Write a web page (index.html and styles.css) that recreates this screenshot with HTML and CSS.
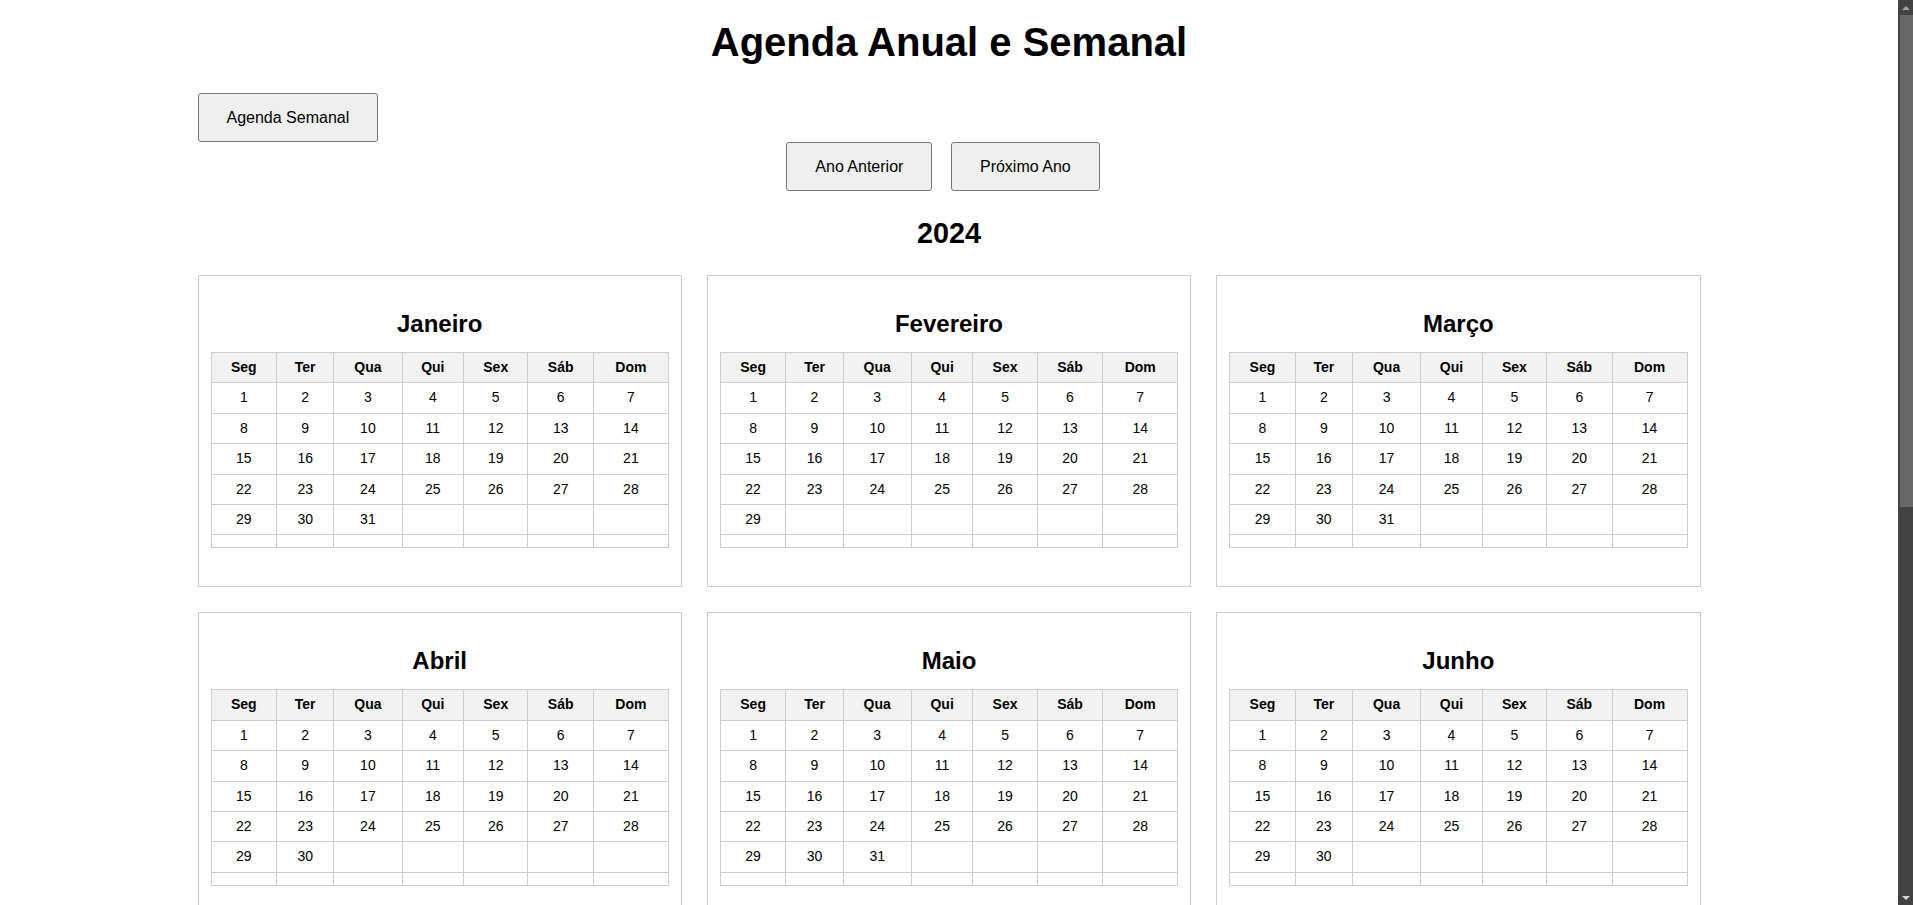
FILE: index.html
```html
<!DOCTYPE html>
<html lang="pt-BR">
<head>
<meta charset="utf-8">
<title>Agenda Anual e Semanal</title>
<link rel="stylesheet" href="styles.css">
</head>
<body>
<div class="page">
  <h1 class="title">Agenda Anual e Semanal</h1>
  <div class="toolbar"><button class="btn">Agenda Semanal</button></div>
  <div class="year-nav"><button class="btn">Ano Anterior</button><button class="btn">Próximo Ano</button></div>
  <h2 class="year">2024</h2>
  <div class="months">
    <section class="month">
      <h2 class="month-name">Janeiro</h2>
      <table class="cal">
        <tr><th>Seg</th><th>Ter</th><th>Qua</th><th>Qui</th><th>Sex</th><th>Sáb</th><th>Dom</th></tr>
        <tr><td>1</td><td>2</td><td>3</td><td>4</td><td>5</td><td>6</td><td>7</td></tr>
        <tr><td>8</td><td>9</td><td>10</td><td>11</td><td>12</td><td>13</td><td>14</td></tr>
        <tr><td>15</td><td>16</td><td>17</td><td>18</td><td>19</td><td>20</td><td>21</td></tr>
        <tr><td>22</td><td>23</td><td>24</td><td>25</td><td>26</td><td>27</td><td>28</td></tr>
        <tr><td>29</td><td>30</td><td>31</td><td></td><td></td><td></td><td></td></tr>
        <tr><td></td><td></td><td></td><td></td><td></td><td></td><td></td></tr>
      </table>
    </section>
    <section class="month">
      <h2 class="month-name">Fevereiro</h2>
      <table class="cal">
        <tr><th>Seg</th><th>Ter</th><th>Qua</th><th>Qui</th><th>Sex</th><th>Sáb</th><th>Dom</th></tr>
        <tr><td>1</td><td>2</td><td>3</td><td>4</td><td>5</td><td>6</td><td>7</td></tr>
        <tr><td>8</td><td>9</td><td>10</td><td>11</td><td>12</td><td>13</td><td>14</td></tr>
        <tr><td>15</td><td>16</td><td>17</td><td>18</td><td>19</td><td>20</td><td>21</td></tr>
        <tr><td>22</td><td>23</td><td>24</td><td>25</td><td>26</td><td>27</td><td>28</td></tr>
        <tr><td>29</td><td></td><td></td><td></td><td></td><td></td><td></td></tr>
        <tr><td></td><td></td><td></td><td></td><td></td><td></td><td></td></tr>
      </table>
    </section>
    <section class="month">
      <h2 class="month-name">Março</h2>
      <table class="cal">
        <tr><th>Seg</th><th>Ter</th><th>Qua</th><th>Qui</th><th>Sex</th><th>Sáb</th><th>Dom</th></tr>
        <tr><td>1</td><td>2</td><td>3</td><td>4</td><td>5</td><td>6</td><td>7</td></tr>
        <tr><td>8</td><td>9</td><td>10</td><td>11</td><td>12</td><td>13</td><td>14</td></tr>
        <tr><td>15</td><td>16</td><td>17</td><td>18</td><td>19</td><td>20</td><td>21</td></tr>
        <tr><td>22</td><td>23</td><td>24</td><td>25</td><td>26</td><td>27</td><td>28</td></tr>
        <tr><td>29</td><td>30</td><td>31</td><td></td><td></td><td></td><td></td></tr>
        <tr><td></td><td></td><td></td><td></td><td></td><td></td><td></td></tr>
      </table>
    </section>
    <section class="month">
      <h2 class="month-name">Abril</h2>
      <table class="cal">
        <tr><th>Seg</th><th>Ter</th><th>Qua</th><th>Qui</th><th>Sex</th><th>Sáb</th><th>Dom</th></tr>
        <tr><td>1</td><td>2</td><td>3</td><td>4</td><td>5</td><td>6</td><td>7</td></tr>
        <tr><td>8</td><td>9</td><td>10</td><td>11</td><td>12</td><td>13</td><td>14</td></tr>
        <tr><td>15</td><td>16</td><td>17</td><td>18</td><td>19</td><td>20</td><td>21</td></tr>
        <tr><td>22</td><td>23</td><td>24</td><td>25</td><td>26</td><td>27</td><td>28</td></tr>
        <tr><td>29</td><td>30</td><td></td><td></td><td></td><td></td><td></td></tr>
        <tr><td></td><td></td><td></td><td></td><td></td><td></td><td></td></tr>
      </table>
    </section>
    <section class="month">
      <h2 class="month-name">Maio</h2>
      <table class="cal">
        <tr><th>Seg</th><th>Ter</th><th>Qua</th><th>Qui</th><th>Sex</th><th>Sáb</th><th>Dom</th></tr>
        <tr><td>1</td><td>2</td><td>3</td><td>4</td><td>5</td><td>6</td><td>7</td></tr>
        <tr><td>8</td><td>9</td><td>10</td><td>11</td><td>12</td><td>13</td><td>14</td></tr>
        <tr><td>15</td><td>16</td><td>17</td><td>18</td><td>19</td><td>20</td><td>21</td></tr>
        <tr><td>22</td><td>23</td><td>24</td><td>25</td><td>26</td><td>27</td><td>28</td></tr>
        <tr><td>29</td><td>30</td><td>31</td><td></td><td></td><td></td><td></td></tr>
        <tr><td></td><td></td><td></td><td></td><td></td><td></td><td></td></tr>
      </table>
    </section>
    <section class="month">
      <h2 class="month-name">Junho</h2>
      <table class="cal">
        <tr><th>Seg</th><th>Ter</th><th>Qua</th><th>Qui</th><th>Sex</th><th>Sáb</th><th>Dom</th></tr>
        <tr><td>1</td><td>2</td><td>3</td><td>4</td><td>5</td><td>6</td><td>7</td></tr>
        <tr><td>8</td><td>9</td><td>10</td><td>11</td><td>12</td><td>13</td><td>14</td></tr>
        <tr><td>15</td><td>16</td><td>17</td><td>18</td><td>19</td><td>20</td><td>21</td></tr>
        <tr><td>22</td><td>23</td><td>24</td><td>25</td><td>26</td><td>27</td><td>28</td></tr>
        <tr><td>29</td><td>30</td><td></td><td></td><td></td><td></td><td></td></tr>
        <tr><td></td><td></td><td></td><td></td><td></td><td></td><td></td></tr>
      </table>
    </section>
    <section class="month">
      <h2 class="month-name">Julho</h2>
      <table class="cal">
        <tr><th>Seg</th><th>Ter</th><th>Qua</th><th>Qui</th><th>Sex</th><th>Sáb</th><th>Dom</th></tr>
        <tr><td>1</td><td>2</td><td>3</td><td>4</td><td>5</td><td>6</td><td>7</td></tr>
        <tr><td>8</td><td>9</td><td>10</td><td>11</td><td>12</td><td>13</td><td>14</td></tr>
        <tr><td>15</td><td>16</td><td>17</td><td>18</td><td>19</td><td>20</td><td>21</td></tr>
        <tr><td>22</td><td>23</td><td>24</td><td>25</td><td>26</td><td>27</td><td>28</td></tr>
        <tr><td>29</td><td>30</td><td>31</td><td></td><td></td><td></td><td></td></tr>
        <tr><td></td><td></td><td></td><td></td><td></td><td></td><td></td></tr>
      </table>
    </section>
    <section class="month">
      <h2 class="month-name">Agosto</h2>
      <table class="cal">
        <tr><th>Seg</th><th>Ter</th><th>Qua</th><th>Qui</th><th>Sex</th><th>Sáb</th><th>Dom</th></tr>
        <tr><td>1</td><td>2</td><td>3</td><td>4</td><td>5</td><td>6</td><td>7</td></tr>
        <tr><td>8</td><td>9</td><td>10</td><td>11</td><td>12</td><td>13</td><td>14</td></tr>
        <tr><td>15</td><td>16</td><td>17</td><td>18</td><td>19</td><td>20</td><td>21</td></tr>
        <tr><td>22</td><td>23</td><td>24</td><td>25</td><td>26</td><td>27</td><td>28</td></tr>
        <tr><td>29</td><td>30</td><td>31</td><td></td><td></td><td></td><td></td></tr>
        <tr><td></td><td></td><td></td><td></td><td></td><td></td><td></td></tr>
      </table>
    </section>
    <section class="month">
      <h2 class="month-name">Setembro</h2>
      <table class="cal">
        <tr><th>Seg</th><th>Ter</th><th>Qua</th><th>Qui</th><th>Sex</th><th>Sáb</th><th>Dom</th></tr>
        <tr><td>1</td><td>2</td><td>3</td><td>4</td><td>5</td><td>6</td><td>7</td></tr>
        <tr><td>8</td><td>9</td><td>10</td><td>11</td><td>12</td><td>13</td><td>14</td></tr>
        <tr><td>15</td><td>16</td><td>17</td><td>18</td><td>19</td><td>20</td><td>21</td></tr>
        <tr><td>22</td><td>23</td><td>24</td><td>25</td><td>26</td><td>27</td><td>28</td></tr>
        <tr><td>29</td><td>30</td><td></td><td></td><td></td><td></td><td></td></tr>
        <tr><td></td><td></td><td></td><td></td><td></td><td></td><td></td></tr>
      </table>
    </section>
    <section class="month">
      <h2 class="month-name">Outubro</h2>
      <table class="cal">
        <tr><th>Seg</th><th>Ter</th><th>Qua</th><th>Qui</th><th>Sex</th><th>Sáb</th><th>Dom</th></tr>
        <tr><td>1</td><td>2</td><td>3</td><td>4</td><td>5</td><td>6</td><td>7</td></tr>
        <tr><td>8</td><td>9</td><td>10</td><td>11</td><td>12</td><td>13</td><td>14</td></tr>
        <tr><td>15</td><td>16</td><td>17</td><td>18</td><td>19</td><td>20</td><td>21</td></tr>
        <tr><td>22</td><td>23</td><td>24</td><td>25</td><td>26</td><td>27</td><td>28</td></tr>
        <tr><td>29</td><td>30</td><td>31</td><td></td><td></td><td></td><td></td></tr>
        <tr><td></td><td></td><td></td><td></td><td></td><td></td><td></td></tr>
      </table>
    </section>
    <section class="month">
      <h2 class="month-name">Novembro</h2>
      <table class="cal">
        <tr><th>Seg</th><th>Ter</th><th>Qua</th><th>Qui</th><th>Sex</th><th>Sáb</th><th>Dom</th></tr>
        <tr><td>1</td><td>2</td><td>3</td><td>4</td><td>5</td><td>6</td><td>7</td></tr>
        <tr><td>8</td><td>9</td><td>10</td><td>11</td><td>12</td><td>13</td><td>14</td></tr>
        <tr><td>15</td><td>16</td><td>17</td><td>18</td><td>19</td><td>20</td><td>21</td></tr>
        <tr><td>22</td><td>23</td><td>24</td><td>25</td><td>26</td><td>27</td><td>28</td></tr>
        <tr><td>29</td><td>30</td><td></td><td></td><td></td><td></td><td></td></tr>
        <tr><td></td><td></td><td></td><td></td><td></td><td></td><td></td></tr>
      </table>
    </section>
    <section class="month">
      <h2 class="month-name">Dezembro</h2>
      <table class="cal">
        <tr><th>Seg</th><th>Ter</th><th>Qua</th><th>Qui</th><th>Sex</th><th>Sáb</th><th>Dom</th></tr>
        <tr><td>1</td><td>2</td><td>3</td><td>4</td><td>5</td><td>6</td><td>7</td></tr>
        <tr><td>8</td><td>9</td><td>10</td><td>11</td><td>12</td><td>13</td><td>14</td></tr>
        <tr><td>15</td><td>16</td><td>17</td><td>18</td><td>19</td><td>20</td><td>21</td></tr>
        <tr><td>22</td><td>23</td><td>24</td><td>25</td><td>26</td><td>27</td><td>28</td></tr>
        <tr><td>29</td><td>30</td><td>31</td><td></td><td></td><td></td><td></td></tr>
        <tr><td></td><td></td><td></td><td></td><td></td><td></td><td></td></tr>
      </table>
    </section>
  </div>
</div>
<div class="scrollbar" aria-hidden="true">
  <span class="sb-btn sb-up"></span>
  <span class="sb-track"><span class="sb-thumb"></span></span>
  <span class="sb-btn sb-down"></span>
</div>
</body>
</html>
```
FILE: styles.css
```css
html {
  background: #fff;
}

body {
  margin: 0;
  padding-right: 15px;
  font-family: "Liberation Sans", Arial, sans-serif;
  color: #000;
  background: #fff;
}

.page {
  width: 1503px;
  margin: 0 auto;
  padding-bottom: 8px;
}

.title {
  margin: 19px 0 28px;
  font-size: 40px;
  line-height: 46px;
  font-weight: bold;
  text-align: center;
}

.toolbar {
  display: flex;
}

.btn {
  font-family: "Liberation Sans", Arial, sans-serif;
  font-size: 16px;
  line-height: 19px;
  padding: 14px 28px;
  background: #efefef;
  color: #000;
  border: 1px solid #767676;
  border-radius: 3px;
}

.year-nav {
  display: flex;
  justify-content: center;
  gap: 6.6px;
}

.year-nav .btn {
  margin-right: 12px;
}

.year {
  margin: 26px 0 25px;
  font-size: 28.8px;
  line-height: 33px;
  font-weight: bold;
  text-align: center;
}

.months {
  display: grid;
  grid-template-columns: repeat(3, 1fr);
  gap: 25px;
}

.month {
  border: 1px solid #ccc;
  padding: 34px 12px 38px;
  min-width: 0;
}

.month-name {
  margin: 0 0 14px;
  font-size: 24px;
  line-height: 28px;
  font-weight: bold;
  text-align: center;
}

.cal {
  width: 100%;
  border-collapse: collapse;
  font-size: 14px;
  line-height: 17.4px;
}

.cal th,
.cal td {
  border: 1px solid #ccc;
  padding: 6px;
  text-align: center;
}

.cal th {
  background: #f2f2f2;
  font-weight: bold;
}

/* dark window scrollbar drawn over the right edge */
.scrollbar {
  position: fixed;
  top: 0;
  right: 0;
  width: 15px;
  height: 100vh;
  background: #424242;
  display: flex;
  flex-direction: column;
}

.sb-btn {
  flex: none;
  height: 15px;
  display: flex;
  align-items: center;
  justify-content: center;
}

.sb-up::before {
  content: "";
  border-left: 4px solid transparent;
  border-right: 4px solid transparent;
  border-bottom: 4px solid #a3a3a3;
}

.sb-down::before {
  content: "";
  border-left: 4px solid transparent;
  border-right: 4px solid transparent;
  border-top: 4px solid #d6d6d6;
}

.sb-track {
  flex: 1;
  display: flex;
  flex-direction: column;
}

.sb-thumb {
  height: 492px;
  margin-left: 2px;
  background: #686868;
}
```
